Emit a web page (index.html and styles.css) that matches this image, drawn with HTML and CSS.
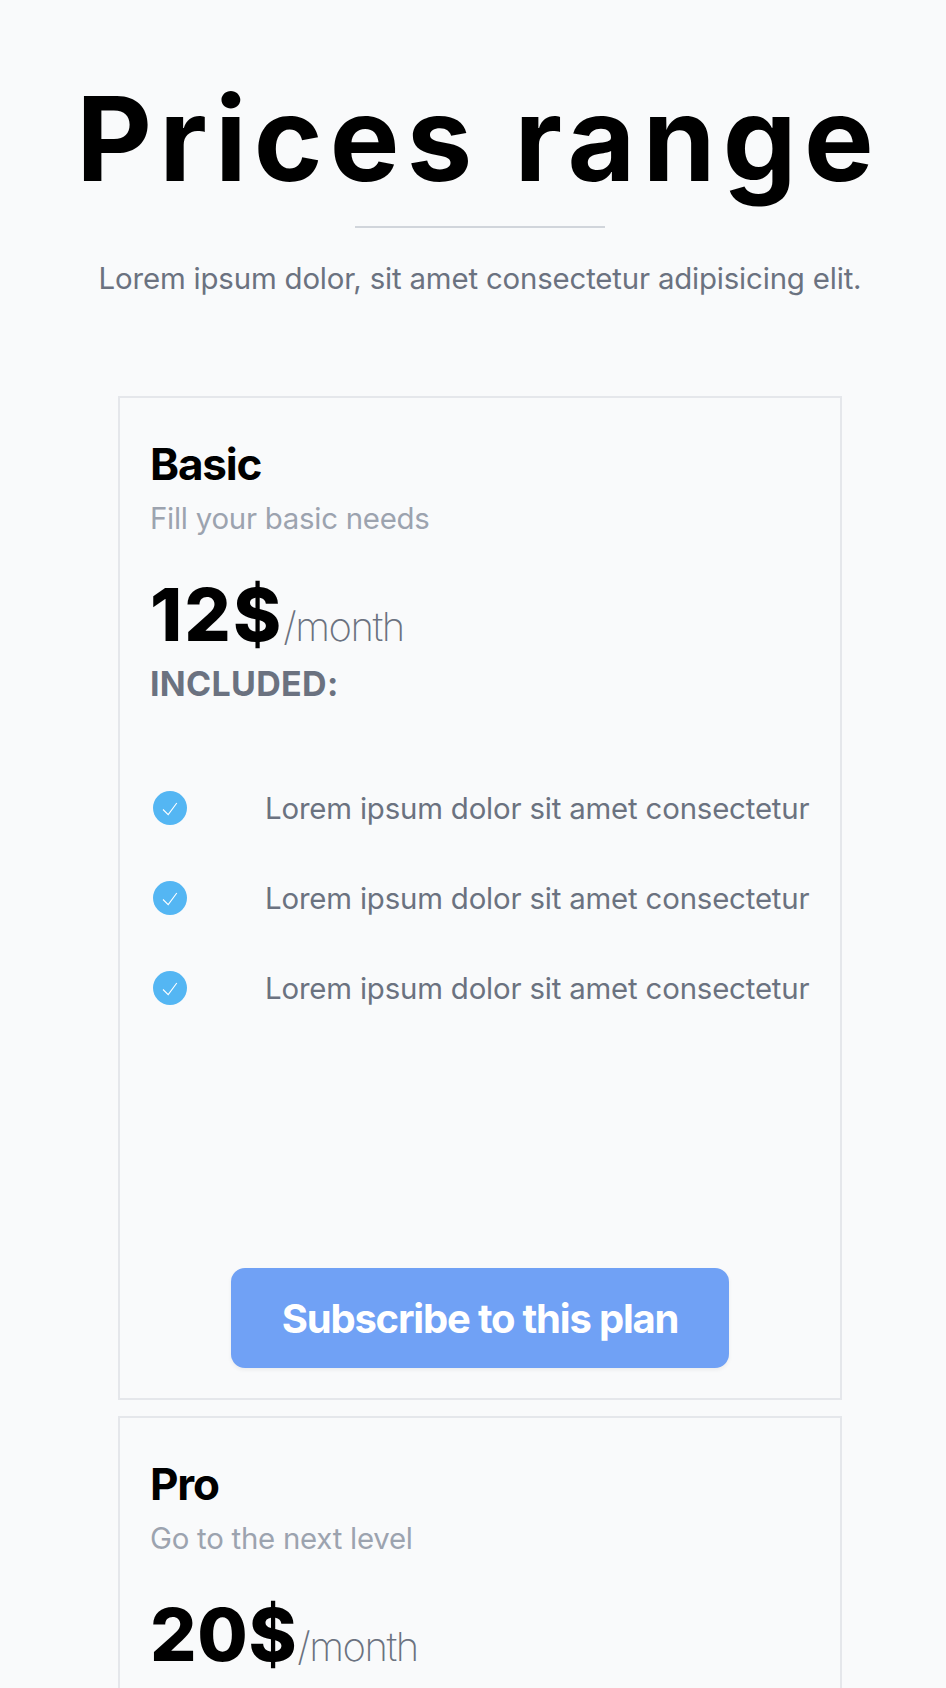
FILE: index.html
```html
<!DOCTYPE html>
<html lang="en">
<head>
<meta charset="utf-8">
<title>Prices range</title>
<link rel="stylesheet" href="styles.css">
</head>
<body>
<header class="hero">
  <h1 class="title"><span>Prices range</span></h1>
  <hr class="rule">
  <p class="lead"><span>Lorem ipsum dolor, sit amet consectetur adipisicing elit.</span></p>
</header>
<main class="plans">
  <section class="plan">
    <h2 class="name"><span>Basic</span></h2>
    <p class="tagline"><span>Fill your basic needs</span></p>
    <p class="price"><span class="amount amount-wide">12$</span><span class="period">/month</span></p>
    <p class="included"><span>INCLUDED:</span></p>
    <ul class="features">
      <li><svg class="check" viewBox="0 0 34 34"><circle cx="17" cy="17" r="17"/><path d="M10 18.5l5.2 5.1L23.8 12"/></svg><span class="feature">Lorem ipsum dolor sit amet consectetur</span></li>
      <li><svg class="check" viewBox="0 0 34 34"><circle cx="17" cy="17" r="17"/><path d="M10 18.5l5.2 5.1L23.8 12"/></svg><span class="feature">Lorem ipsum dolor sit amet consectetur</span></li>
      <li><svg class="check" viewBox="0 0 34 34"><circle cx="17" cy="17" r="17"/><path d="M10 18.5l5.2 5.1L23.8 12"/></svg><span class="feature">Lorem ipsum dolor sit amet consectetur</span></li>
    </ul>
    <button class="subscribe"><span>Subscribe to this plan</span></button>
  </section>
  <section class="plan plan-cut">
    <h2 class="name"><span>Pro</span></h2>
    <p class="tagline"><span>Go to the next level</span></p>
    <p class="price"><span class="amount">20$</span><span class="period">/month</span></p>
  </section>
</main>
</body>
</html>
```
FILE: styles.css
```css
* { box-sizing: border-box; margin: 0; padding: 0; }
body { height: 1688px; overflow: hidden; background: #f9fafb; font-family: Inter, "Liberation Sans", sans-serif; color: #000; white-space: nowrap; }
.hero { width: 960px; height: 396px; padding-top: 75px; text-align: center; }
.title { padding-right: 3px; font-size: 117px; line-height: 128px; font-weight: 650; letter-spacing: 7.2px; }
.rule { width: 250px; height: 2px; margin: 23px auto 0; border: 0; background: #d1d5db; }
.lead { margin-top: 31px; font-size: 29.4px; line-height: 40px; color: #6b7280; letter-spacing: -0.17px; }
.plans { width: 724px; margin-left: 118px; display: grid; grid-template-columns: 724px; row-gap: 16px; }
.plan { height: 1004px; border: 2px solid #e5e7eb; padding: 36px 30px 30px; display: flex; flex-direction: column; }
.plan-cut { height: 272px; border-bottom: 0; padding-bottom: 0; }
.name { font-size: 44px; line-height: 60px; font-weight: 650; letter-spacing: -1.2px; }
.tagline { margin-top: 5px; font-size: 29.4px; line-height: 40px; color: #9ca3af; letter-spacing: -0.25px; }
.price { display: flex; align-items: baseline; height: 88px; margin-top: 32px; }
.amount { font-size: 73px; line-height: 88px; font-weight: 800; letter-spacing: 0.7px; }
.amount-wide { letter-spacing: 2.1px; }
.period { font-size: 40px; font-weight: 200; color: #6b7280; letter-spacing: -1.5px; }
.included { margin-top: 3px; font-size: 34px; line-height: 44px; font-weight: 700; color: #6b7280; letter-spacing: 0.3px; }
.features { list-style: none; margin-top: 82px; display: grid; row-gap: 50px; }
.features li { height: 40px; display: flex; align-items: center; }
.check { flex: none; width: 34px; height: 34px; margin-left: 3px; margin-right: 78px; fill: #54b6f3; }
.check path { fill: none; stroke: #fff; stroke-width: 1.1; }
.feature { padding-top: 2px; font-size: 29.4px; line-height: 40px; color: #6b7280; letter-spacing: -0.18px; }
.subscribe { align-self: center; margin-top: auto; width: 498px; height: 100px; padding-top: 2px; border: 0; border-radius: 14px; background: #70a1f5; color: #fff; font: 650 40px/48px Inter, sans-serif; letter-spacing: -1.2px; box-shadow: 0 2px 4px rgb(0 0 0 / 6%); }
```
